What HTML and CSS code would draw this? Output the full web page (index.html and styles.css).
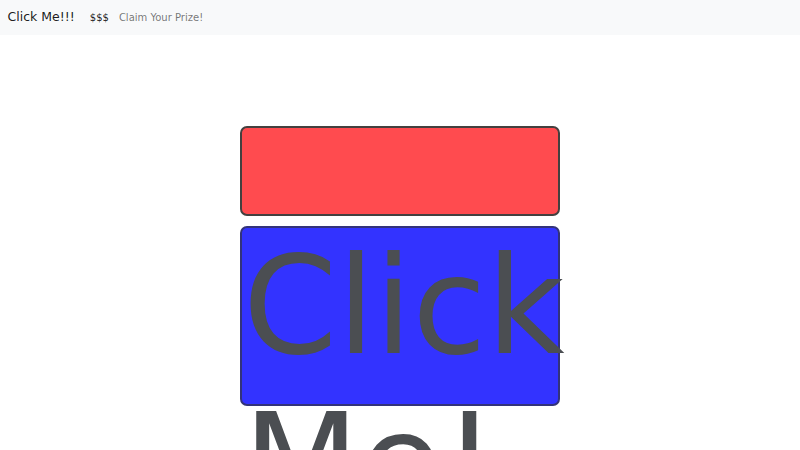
FILE: index.html
```html
<!DOCTYPE html>
<html lang="en">
<head>
<meta charset="utf-8">
<title>Click Me!!!</title>
<link rel="stylesheet" href="styles.css">
</head>
<body>
<nav class="navbar">
  <a class="brand" href="#">Click Me!!!</a>
  <ul class="nav">
    <li><a class="nav-link active" href="#">$$$</a></li>
    <li><a class="nav-link" href="#">Claim Your Prize!</a></li>
  </ul>
</nav>
<main class="stage">
  <div class="box box-red"></div>
  <div class="box box-blue"><span class="label">Click Me!</span></div>
</main>
</body>
</html>
```

FILE: styles.css
```css
html {
  height: 100%;
}

body {
  margin: 0;
  padding: 0;
  min-height: 100vh;
  background: #ffffff;
  font-family: "DejaVu Sans", sans-serif;
  color: #212529;
}

.navbar {
  display: flex;
  align-items: center;
  height: 35px;
  padding: 0 7.5px;
  background: #f8f9fa;
}

.brand {
  font-size: 12.5px;
  color: rgba(0, 0, 0, 0.9);
  text-decoration: none;
  margin-right: 10px;
  line-height: 1.5;
}

.nav {
  display: flex;
  list-style: none;
  margin: 0;
  padding: 0;
}

.nav-link {
  display: block;
  padding: 5px;
  font-size: 10px;
  line-height: 1.5;
  color: rgba(0, 0, 0, 0.55);
  text-decoration: none;
}

.nav-link.active {
  color: rgba(0, 0, 0, 0.9);
}

.stage {
  display: flex;
  flex-direction: column;
  align-items: center;
  gap: 9.5px;
  margin-top: 91px;
  padding-bottom: 160px;
}

.box {
  box-sizing: border-box;
  width: 320px;
  border: 2px solid #44403f;
  border-radius: 7px;
}

.box-red {
  height: 90px;
  background: #ff4b4f;
}

.box-blue {
  height: 180px;
  background: #3333ff;
  border-color: #33337a;
  padding: 0 0 0 1px;
}

.label {
  display: block;
  color: #4b4e52;
  font-size: 135px;
  line-height: 157px;
}
```
